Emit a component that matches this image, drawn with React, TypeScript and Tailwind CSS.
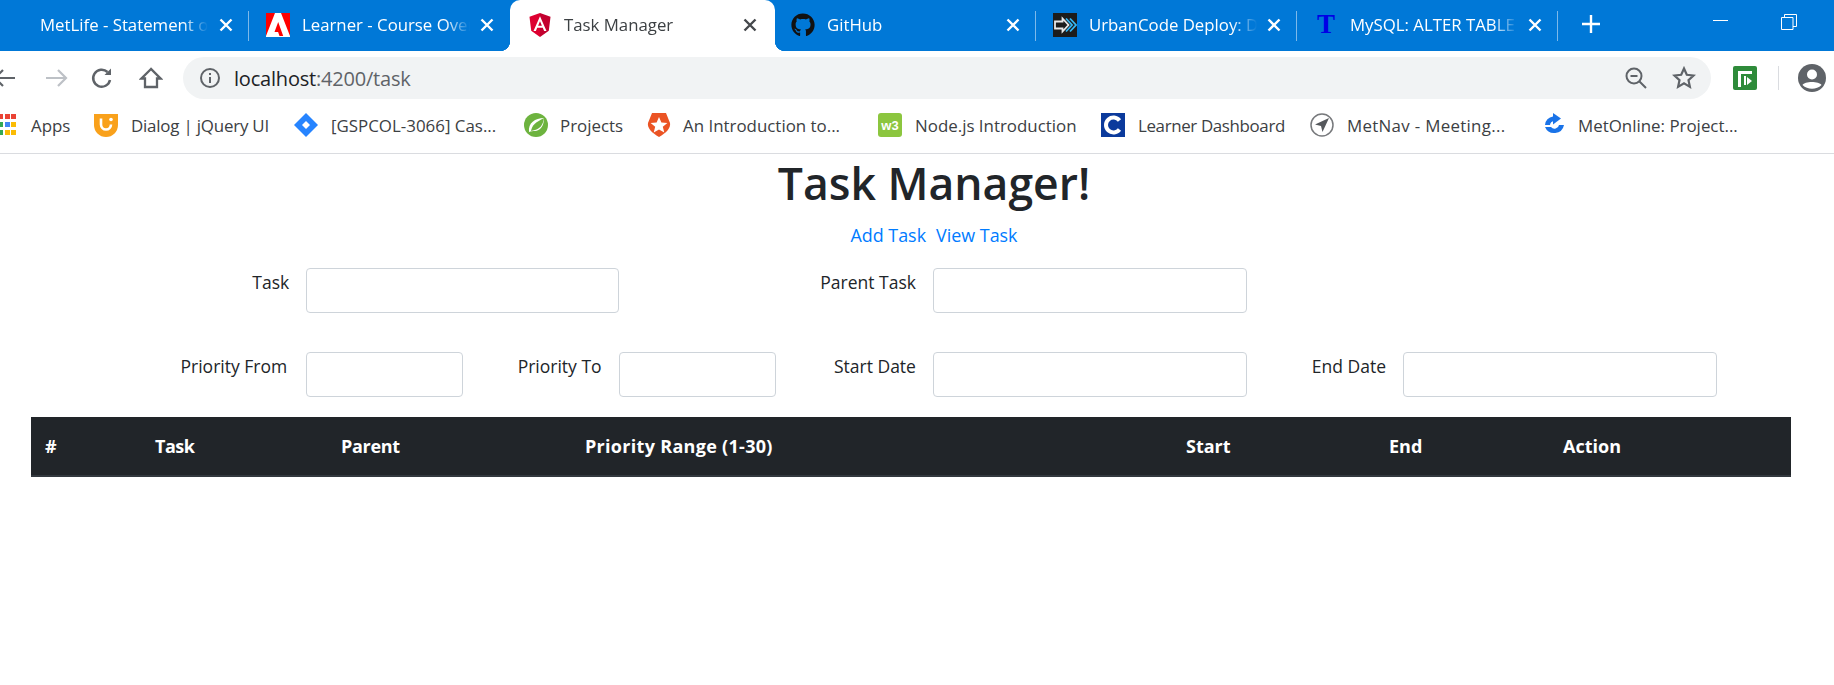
import React from "react";
import { FaGithub } from "react-icons/fa";

const uiFont = "font-['Open_Sans','Noto_Sans',sans-serif]";

const CloseIcon = ({ dark }: { dark?: boolean }) => (
  <svg width="14" height="14" viewBox="0 0 14 14" className={dark ? "text-[#45484c]" : "text-white"}>
    <path d="M1.500 1.500l11 11M12.500 1.500l-11 11" stroke="currentColor" strokeWidth="2.400" />
  </svg>
);

const AdobeIcon = () => (
  <svg width="24" height="24" viewBox="0 0 24 24">
    <rect width="24" height="24" fill="#fff" />
    <path d="M0 0h9L0 23z M15 0h9v23z" fill="#f00" />
    <path d="M12.200 9l5 14h-3.700l-1.400-4H8.500z" fill="#f00" />
  </svg>
);

const AngularIcon = () => (
  <svg width="24" height="24" viewBox="0 0 24 24">
    <path d="M12 0L1.500 3.800l1.700 14L12 24z" fill="#dd0031" />
    <path d="M12 0l10.500 3.800-1.700 14L12 24z" fill="#c3002f" />
    <path d="M12 3.200L5.500 18h2.400l1.300-3.300h5.600l1.300 3.300h2.400zm1.900 9.600h-3.800L12 8.200z" fill="#fff" />
  </svg>
);

const UrbanCodeIcon = () => (
  <svg width="24" height="24" viewBox="0 0 24 24">
    <rect width="24" height="24" fill="#1c1c1c" />
    <path d="M2 8.500h7.500V5.500l6 6.500-6 6.500v-3H2z" fill="none" stroke="#e8e8e8" strokeWidth="1.800" />
    <path d="M13 5.500l6 6.500-6 6.500M17 5.500l6 6.500-6 6.500" fill="none" stroke="#35b6f2" strokeWidth="1.800" />
  </svg>
);

const AppsIcon = () => (
  <svg width="16" height="22" viewBox="0 0 16 22">
    <path d="M0 0h3v5H0z M5 0h5v5H5z M11 0h5v5h-5z" fill="#ea4335" />
    <path d="M0 8h3v5H0z" fill="#34a853" />
    <path d="M5 8h5v5H5z" fill="#4285f4" />
    <path d="M11 8h5v5h-5z" fill="#fbbc05" />
    <path d="M0 16h3v5H0z" fill="#34a853" />
    <path d="M5 16h5v5H5z M11 16h5v5h-5z" fill="#fbbc05" />
  </svg>
);

const DialogIcon = () => (
  <svg width="24" height="24" viewBox="0 0 24 24">
    <path d="M0 1h24v11a12 12 0 0 1-24 0z" fill="#f9a11b" />
    <path d="M7 5.500v6a5 5 0 0 0 10 0" fill="none" stroke="#fff" strokeWidth="2.600" />
    <circle cx="17" cy="6.500" r="1.800" fill="#fff" />
  </svg>
);

const JiraIcon = () => (
  <svg width="24" height="24" viewBox="0 0 24 24">
    <path d="M12 0l12 12-12 12L0 12z" fill="#2684ff" />
    <path d="M12 8l4 4-4 4-4-4z" fill="#fff" />
  </svg>
);

const SpringIcon = () => (
  <svg width="24" height="24" viewBox="0 0 24 24">
    <circle cx="12" cy="12" r="12" fill="#6db33f" />
    <path d="M5 19C4 10 11 5 20 5c0 8-4 13-9 13-2 0-4 0-6 1z" fill="#fff" />
    <path d="M7 18C8 12 12 9 20 5c-1 8-5 11-9 12z" fill="#6db33f" />
  </svg>
);

const AuthIcon = () => (
  <svg width="24" height="24" viewBox="0 0 24 24">
    <path d="M5 0h14l4 10c1 5-4 10-11 14C5 20 0 15 1 10z" fill="#eb5424" />
    <path d="M12 4l2.400 5.600 6 .4-4.600 3.800 1.500 5.800L12 16.500 6.700 19.600l1.500-5.800L3.600 10l6-.4z" fill="#fff" />
  </svg>
);

const W3Icon = () => (
  <span className="flex size-6 items-center justify-center rounded-[3px] bg-[#8cc63f] font-['Liberation_Sans',sans-serif] text-[13px] font-bold leading-none text-white">
    w3
  </span>
);

const CourseraIcon = () => (
  <svg width="24" height="24" viewBox="0 0 24 24">
    <rect width="24" height="24" fill="#0b3a9c" />
    <path d="M18.500 7.500a7.500 7.500 0 1 0 0 9" fill="none" stroke="#fff" strokeWidth="4" />
  </svg>
);

const MetNavIcon = () => (
  <svg width="24" height="24" viewBox="0 0 24 24">
    <circle cx="12" cy="12" r="11" fill="#fff" stroke="#77797c" strokeWidth="1.500" />
    <path d="M19 5L5 11.500l6 1.500 1.500 6z" fill="#55585c" />
  </svg>
);

const MetOnlineIcon = () => (
  <svg width="22" height="24" viewBox="0 0 22 24">
    <path d="M10 3.500a9 9 0 0 0-8 8.500h5a4.500 4.500 0 0 1 4-4z" fill="#1a73e8" />
    <path d="M10 0l8 5.500-8 6z" fill="#1a73e8" />
    <path d="M21 12a10 10 0 0 1-19 2h6a4.500 4.500 0 0 0 8-2z" fill="#1a73e8" />
  </svg>
);

const tabs = [
  { title: "MetLife - Statement of", icon: null, width: "w-[249px]", pad: "pl-[40px]", sep: true },
  { title: "Learner - Course Overview", icon: <AdobeIcon />, width: "w-[261px]", pad: "pl-[17px]" },
  { title: "Task Manager", icon: <AngularIcon />, width: "w-[265px]", pad: "pl-[18px]", active: true },
  { title: "GitHub", icon: <FaGithub size={24} color="#111" />, width: "w-[261px]", pad: "pl-[16px]", sep: true },
  { title: "UrbanCode Deploy: Dashboard", icon: <UrbanCodeIcon />, width: "w-[261px]", pad: "pl-[17px]", sep: true },
  {
    title: "MySQL: ALTER TABLE",
    icon: <span className="flex w-6 justify-center font-['Liberation_Serif',serif] text-[27px] font-bold leading-none text-[#0000e6]">T</span>,
    width: "w-[261px]",
    pad: "pl-[17px]",
    sep: true,
  },
];

const bookmarks = [
  { label: "Apps", icon: <AppsIcon />, width: "w-[94px]", gap: "gap-[15px]", track: "" },
  { label: "Dialog | jQuery UI", icon: <DialogIcon />, width: "w-[200px]", gap: "gap-[13px]", track: "tracking-[-0.2px]" },
  { label: "[GSPCOL-3066] Cas...", icon: <JiraIcon />, width: "w-[230px]", gap: "gap-[13px]", track: "" },
  { label: "Projects", icon: <SpringIcon />, width: "w-[123px]", gap: "gap-[12px]", track: "" },
  { label: "An Introduction to...", icon: <AuthIcon />, width: "w-[231px]", gap: "gap-[12px]", track: "" },
  { label: "Node.js Introduction", icon: <W3Icon />, width: "w-[223px]", gap: "gap-[13px]", track: "" },
  { label: "Learner Dashboard", icon: <CourseraIcon />, width: "w-[209px]", gap: "gap-[13px]", track: "tracking-[-0.35px]" },
  { label: "MetNav - Meeting...", icon: <MetNavIcon />, width: "w-[233px]", gap: "gap-[13px]", track: "tracking-[0.3px]" },
  { label: "MetOnline: Project...", icon: <MetOnlineIcon />, width: "w-[240px]", gap: "gap-[13px]", track: "" },
];

const Label = ({ text, className = "pr-[17px]" }: { text: string; className?: string }) => (
  <label className={`text-right leading-[28px] ${className}`}>{text}</label>
);

const Field = ({ className = "" }: { className?: string }) => (
  <input className={`h-[45px] rounded-[4px] border border-[#ced4da] bg-white ${className}`} />
);

const TabStrip = () => (
  <div className="flex h-[51px] items-stretch overflow-hidden bg-[#0078d7] pb-[1px] text-[16.800px] text-white">
    {tabs.map((tab) => (
      <div
        key={tab.title}
        className={`relative -mb-[1px] flex shrink-0 items-center pb-[2px] ${tab.width} ${tab.pad} ${
          tab.active ? "rounded-t-[10px] bg-white text-[#3c4043]" : ""
        }`}
      >
        {tab.active && (
          <>
            <span className="absolute bottom-0 -left-[10px] size-[10px] bg-[radial-gradient(circle_at_0_0,#0078d7_10px,#fff_10.500px)]" />
            <span className="absolute bottom-0 -right-[10px] size-[10px] bg-[radial-gradient(circle_at_100%_0,#0078d7_10px,#fff_10.500px)]" />
          </>
        )}
        {tab.icon && <span className="mr-[12px] flex w-6 shrink-0 items-center justify-center">{tab.icon}</span>}
        <span className="w-[168px] overflow-hidden whitespace-nowrap [mask-image:linear-gradient(to_right,#000_85%,transparent)]">
          {tab.title}
        </span>
        <span className={`ml-auto flex ${tab.active ? "mr-[18px]" : "mr-[16px]"}`}>
          <CloseIcon dark={tab.active} />
        </span>
        {tab.sep && <span className="absolute right-0 top-[11px] h-[30px] w-[1px] bg-[#7db9ea]" />}
      </div>
    ))}
    <div className="flex w-[66px] shrink-0 items-center justify-center pb-[2px]">
      <svg width="18" height="18" viewBox="0 0 18 18">
        <path d="M9 0v18M0 9h18" stroke="#fff" strokeWidth="2.400" />
      </svg>
    </div>
    <div className="ml-auto flex items-start">
      <span className="mt-[20px] mr-[53px] h-[1px] w-[15px] bg-white" />
      <svg width="16" height="16" viewBox="0 0 16 16" className="mr-[37px] mt-[14px]">
        <path d="M.5 3.500h11.500v12H.5z M3.500 3.500v-3h12v12H12" fill="none" stroke="#fff" />
      </svg>
    </div>
  </div>
);

const Toolbar = () => (
  <div className="flex h-[54px] items-center">
    <div className="flex w-[183px] shrink-0 items-center">
      <svg width="24" height="24" viewBox="0 0 24 24" className="-ml-[8px] mr-[28px]" fill="none" stroke="#5f6368" strokeWidth="2.200">
        <path d="M23 12H3M11 4l-8 8 8 8" />
      </svg>
      <svg width="24" height="24" viewBox="0 0 24 24" className="mr-[22px]" fill="none" stroke="#bdc1c6" strokeWidth="2.200">
        <path d="M2 12h20M14 4l8 8-8 8" />
      </svg>
      <svg width="24" height="24" viewBox="0 0 24 24" className="mr-[25px]" fill="none" stroke="#5f6368" strokeWidth="2.500">
        <path d="M20 14a8.500 8.500 0 1 1-2.500-8" />
        <path d="M21 2.500V9h-6.500z" fill="#5f6368" stroke="none" />
      </svg>
      <svg width="24" height="24" viewBox="0 0 24 24" fill="none" stroke="#5f6368" strokeWidth="2.300">
        <path d="M12 3L2.500 12.500H6V21h12v-8.500h3.500z" />
      </svg>
    </div>
    <div className="flex h-[42px] w-[1528px] shrink-0 items-center rounded-full bg-[#f1f3f4] pl-[16px] pr-[15px]">
      <svg width="22" height="22" viewBox="0 0 22 22" className="mr-[13px]" fill="none" stroke="#5f6368" strokeWidth="2">
        <circle cx="11" cy="11" r="9" />
        <path d="M11 10v6M11 6v2" />
      </svg>
      <span className="pt-[1px] text-[20px] tracking-[-0.2px] text-[#202124]">
        localhost<span className="text-[#5f6368]">:4200/task</span>
      </span>
      <svg width="24" height="24" viewBox="0 0 24 24" className="ml-auto mr-[24px]" fill="none" stroke="#5f6368" strokeWidth="2">
        <circle cx="10" cy="10" r="7.500" />
        <path d="M6.500 10h7M15.500 15.500l6.500 6.500" />
      </svg>
      <svg width="24" height="24" viewBox="0 0 24 24" fill="none" stroke="#5f6368" strokeWidth="2.200">
        <path d="M12 2.500l2.800 6.300 6.700.7-5 4.600 1.400 6.800-5.900-3.500-5.900 3.500 1.400-6.800-5-4.600 6.700-.7z" />
      </svg>
    </div>
    <div className="flex flex-1 items-center">
      <svg width="24" height="24" viewBox="0 0 24 24" className="ml-[22px] mr-[21px]">
        <rect width="24" height="24" rx="2" fill="#2e8b3a" />
        <path d="M5 21V5h14v3H8v13z" fill="#fff" />
        <path d="M11 10h2v9h-2z M14 11l5 4-5 4z" fill="#fff" />
      </svg>
      <span className="mr-[19px] h-[24px] w-[1px] bg-[#dadce0]" />
      <svg width="28" height="28" viewBox="0 0 28 28">
        <circle cx="14" cy="14" r="14" fill="#5f6368" />
        <circle cx="14" cy="10.500" r="5" fill="#fff" />
        <path d="M4.500 21c2-4 16.500-4 19 0-5 5-14 5-19 0z" fill="#fff" />
      </svg>
    </div>
  </div>
);

const BookmarksBar = () => (
  <div className="flex h-[49px] items-center border-b border-[#dadce0] pb-[7px] text-[16.900px] text-[#3c4043]">
    {bookmarks.map((b) => (
      <div key={b.label} className={`flex shrink-0 items-center whitespace-nowrap ${b.width} ${b.gap}`}>
        <span className="flex shrink-0">{b.icon}</span>
        <span className={b.track}>{b.label}</span>
      </div>
    ))}
  </div>
);

export default function App() {
  return (
    <div className={`min-h-[685px] overflow-hidden bg-white ${uiFont}`}>
      <TabStrip />
      <Toolbar />
      <BookmarksBar />

      <h1 className="mt-[1px] pl-[34px] text-center text-[44.500px] font-semibold leading-[56px] text-[#212529]">Task Manager!</h1>
      <div className="mt-[10px] flex justify-center gap-[10px] pl-[34px] text-[17.900px] leading-[28px] text-[#007bff]">
        <a>Add Task</a>
        <a>View Task</a>
      </div>

      <div className="mt-[19px] grid grid-cols-[149.500px_repeat(11,156.700px)] grid-rows-[45px_45px] gap-y-[39px] text-[17.500px] text-[#212529]">
        <Label text="Task" className="col-start-2 pr-[17px]" />
        <Field className="col-span-2 col-start-3 w-[313px]" />
        <Label text="Parent Task" className="col-start-6 pr-[17px]" />
        <Field className="col-span-2 col-start-7 w-[314px]" />

        <Label text="Priority From" className="col-start-2 pr-[19px]" />
        <Field className="col-start-3 w-[157px]" />
        <Label text="Priority To" className="col-start-4 pr-[18px]" />
        <Field className="col-start-5 -ml-[1px] w-[157px]" />
        <Label text="Start Date" className="col-start-6 pr-[17px]" />
        <Field className="col-span-2 col-start-7 w-[314px]" />
        <Label text="End Date" className="col-start-9 pr-[17px]" />
        <Field className="col-span-2 col-start-10 w-[314px]" />
      </div>

      <div className="mx-[31px] mt-[20px] w-[1760px]">
        <table className="w-full table-fixed border-collapse">
          <thead className="bg-[#212529] text-left text-[18px] font-bold text-white">
            <tr className="h-[59px] border-b-2 border-[#32383e]">
              <th className="w-[110px] pl-[14px]">#</th>
              <th className="w-[186px] pl-[14px] tracking-[-0.5px]">Task</th>
              <th className="w-[244px] pl-[14px] tracking-[-0.3px]">Parent</th>
              <th className="w-[601px] pl-[14px] tracking-[0.3px]">Priority Range (1-30)</th>
              <th className="w-[203px] pl-[14px]">Start</th>
              <th className="w-[174px] pl-[14px]">End</th>
              <th className="pl-[14px]">Action</th>
            </tr>
          </thead>
        </table>
      </div>
    </div>
  );
}
